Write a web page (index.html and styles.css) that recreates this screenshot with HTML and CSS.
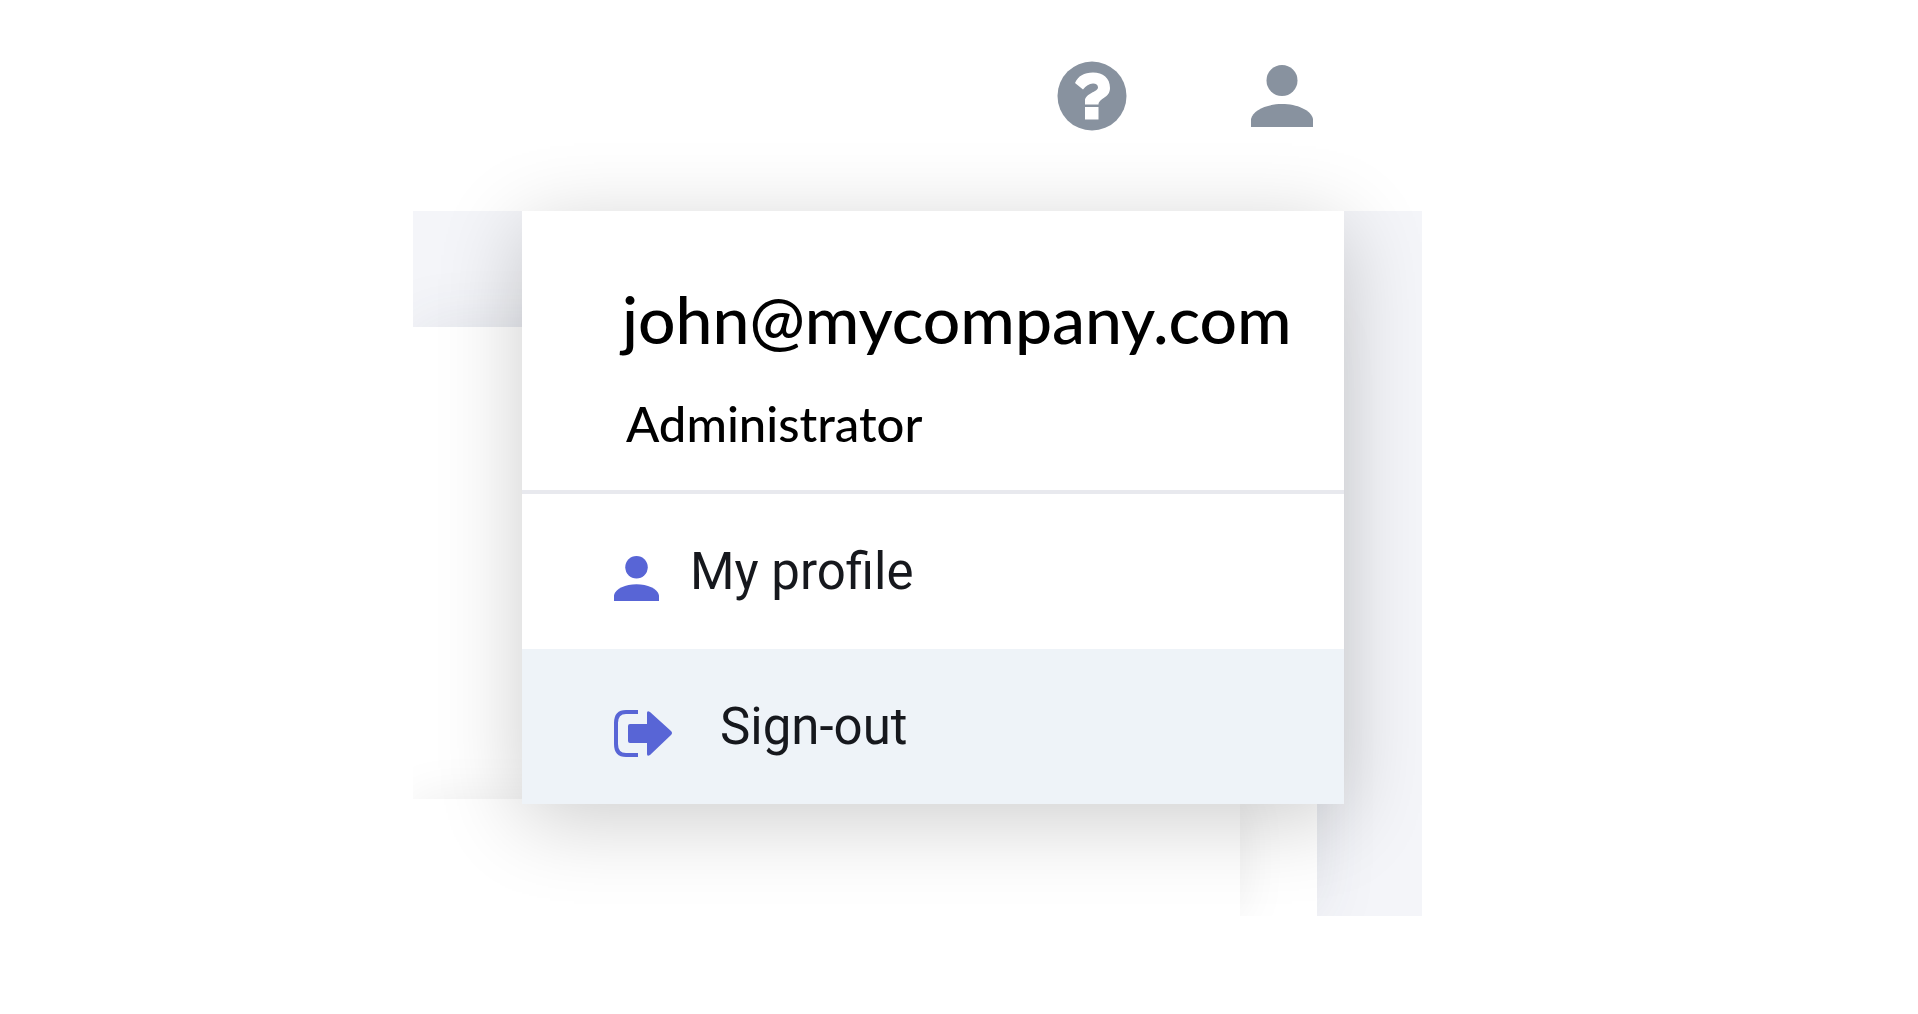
FILE: index.html
```html
<!DOCTYPE html>
<html lang="en">
<head>
  <meta charset="UTF-8">
  <meta name="viewport" content="width=device-width, initial-scale=1.0">
  <title>Account menu</title>
  <link rel="stylesheet" href="styles.css">
</head>
<body>

  <div class="app">
    <!-- Top bar -->
    <header class="top-bar">
      <button class="icon-button" type="button" aria-label="Help">
        <svg class="help-icon" viewBox="0 0 70 70">
          <circle cx="35" cy="35" r="34.5" fill="#88929f"/>
          <path fill="#fff" d="M18 22C21 15 27 11.500 36 11.500C46 11.500 53 17 53 27C53 37 42 37 41.500 43.500H28V40C28 32 41 31 41 26.500C41 24 39 22.500 36 22.500C32 22.500 29 25 26 28.500Z"/>
          <path fill="#fff" d="M28 46h13.500v12.500H28z"/>
        </svg>
      </button>
      <button class="icon-button" type="button" aria-label="Account" aria-expanded="true">
        <svg class="user-icon" viewBox="0 0 62 62">
          <circle cx="31" cy="15.500" r="15.500"/>
          <path d="M0 62V54C2 45 16 39 31 39S60 45 62 54V62Z"/>
        </svg>
      </button>

      <!-- Account menu -->
      <div class="menu">
        <div class="menu-head">
          <div class="email">john@mycompany.com</div>
          <div class="role">Administrator</div>
        </div>
        <a class="menu-item" href="#profile">
          <svg class="profile-icon" viewBox="0 0 62 62">
            <circle cx="31" cy="15.500" r="15.500"/>
            <path d="M0 62V54C2 45 16 39 31 39S60 45 62 54V62Z"/>
          </svg>
          <span>My profile</span>
        </a>
        <a class="menu-item sign-out active" href="#sign-out">
          <svg class="exit-icon" viewBox="0 0 58 47">
            <path d="M24 2H12Q2 2 2 13V34Q2 45 12 45H24" fill="none" stroke="#5865d6" stroke-width="4"/>
            <path d="M16 14H33V3Q33 0 36 2L57 21Q59 23 57 25L36 45Q33 47 33 44V33H16Q14 33 14 31V16Q14 14 16 14Z"/>
          </svg>
          <span>Sign-out</span>
        </a>
      </div>
    </header>

    <!-- Page behind the menu -->
    <main class="page">
      <div class="panel">
        <div class="panel-card"></div>
      </div>
    </main>
  </div>

</body>
</html>
```
FILE: styles.css
```css
body {
  margin: 0;
  background-color: #fff;
  color: #000;
  display: grid;
  grid-template-columns: 413fr 1009fr 496fr;
}

.app {
  grid-column: 2;
  overflow: hidden;
}

/* Top bar */
.top-bar {
  position: relative;
  z-index: 2;
  display: flex;
  justify-content: flex-end;
  align-items: center;
  gap: 124px;
  padding: 61px 109px 80px 0;
}

.icon-button {
  display: flex;
  padding: 0;
  border: 0;
  background: none;
  cursor: pointer;
}

.help-icon {
  width: 70px;
  height: 70px;
}

.user-icon {
  width: 62px;
  height: 62px;
  fill: #88929f;
}

/* Account menu */
.menu {
  position: absolute;
  top: 100%;
  left: 109px;
  right: 78px;
  background-color: #fff;
  box-shadow: 0 16px 80px rgba(0, 0, 0, 0.2);
}

.menu-head {
  padding: 68px 0 37px 100px;
  border-bottom: 4px solid #e8e9ee;
  font-family: Lato, "Liberation Sans", sans-serif;
  font-weight: 500;
}

.email {
  font-size: 66px;
  line-height: 80px;
  white-space: nowrap;
}

.role {
  margin-top: 34px;
  padding-left: 4px;
  font-size: 49px;
  line-height: 60px;
}

.menu-item {
  display: flex;
  align-items: center;
  gap: 31px;
  height: 155px;
  padding-left: 92px;
  color: #16181d;
  font-family: Roboto, "Liberation Sans", sans-serif;
  font-size: 51px;
  line-height: 60px;
  text-decoration: none;
}

.menu-item.sign-out {
  gap: 48px;
}

.menu-item.active {
  background-color: #eef3f8;
}

.menu-item svg {
  margin-top: 14px;
  fill: #5865d6;
}

.profile-icon {
  width: 45px;
  height: 45px;
}

.exit-icon {
  width: 58px;
  height: 47px;
}

/* Page behind the menu */
.page {
  padding: 116px 105px 0 0;
  overflow: hidden;
  background-color: #f4f5f9;
}

.panel {
  padding: 472px 77px 0 0;
  background-color: #fff;
  box-shadow: 0 0 60px rgba(60, 65, 90, 0.1);
}

.panel-card {
  height: 117px;
  background-color: #fff;
  box-shadow: 0 0 50px rgba(0, 0, 0, 0.08);
}
```
